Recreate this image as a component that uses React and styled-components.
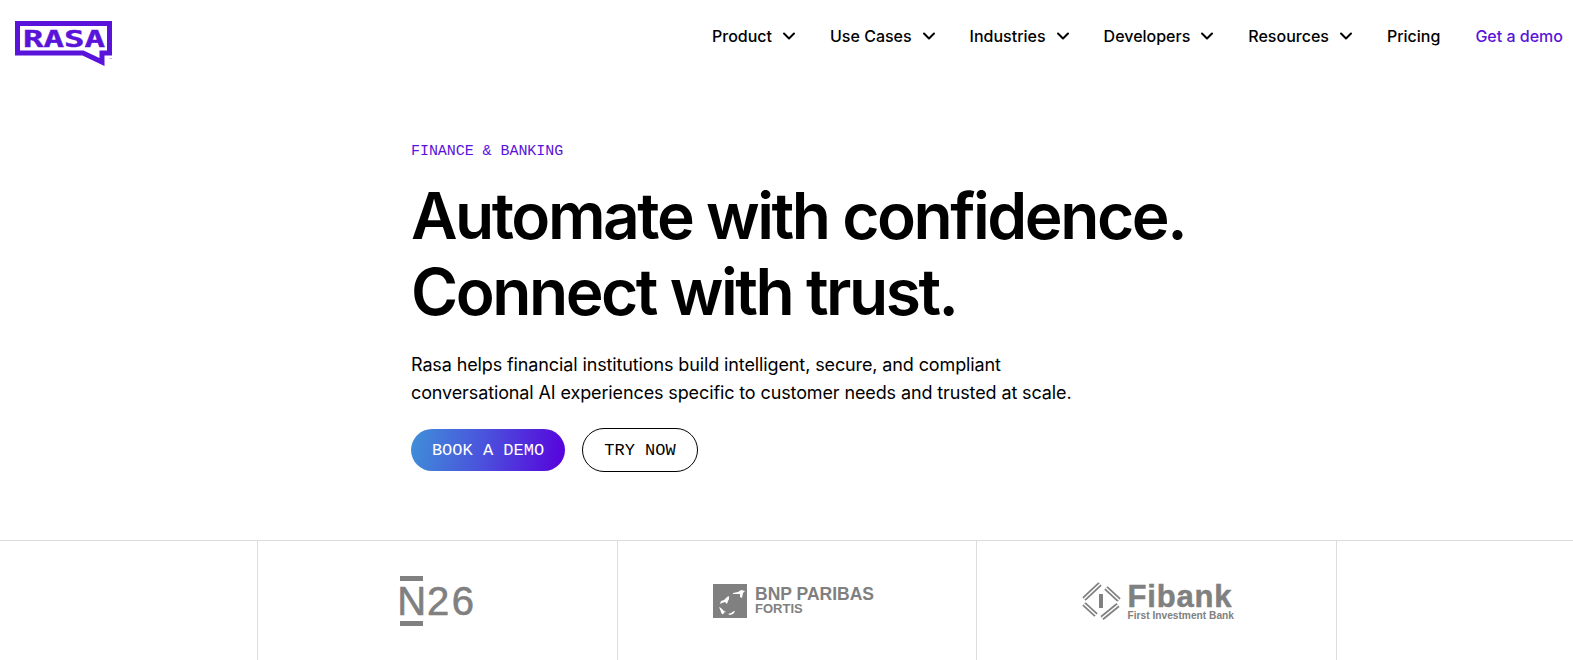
import React from "react";
import styled, { createGlobalStyle } from "styled-components";
import { ChevronDown } from "lucide-react";

const GlobalStyle = createGlobalStyle`
  html, body {
    margin: 0;
    padding: 0;
    height: 660px;
    overflow: hidden;
    background: #fff;
    font-family: Inter, "Liberation Sans", sans-serif;
    color: #000;
  }
`;

const purple = "#5a13d9";
const logoGrey = "#808080";

const Header = styled.header`
  height: 72px;
  display: flex;
  align-items: center;
  justify-content: space-between;
  padding: 0 10px 0 15px;
`;

const Logo = styled.svg`
  width: 100px;
  height: 48px;
  align-self: flex-start;
  margin-top: 21px;
  display: block;
`;

const Nav = styled.nav`
  display: flex;
  align-items: center;
  gap: 35px;
`;

const NavItem = styled.a`
  display: flex;
  align-items: center;
  gap: 7px;
  font-size: 16px;
  font-weight: 500;
  color: ${(p) => (p.$accent ? purple : "#000")};
`;

const Chevron = styled(ChevronDown)`
  margin-right: -4px;
`;

const Hero = styled.section`
  height: 468px;
  box-sizing: border-box;
  padding: 71px 0 0 411px;
`;

const Eyebrow = styled.div`
  font-family: "Liberation Mono", monospace;
  font-size: 15px;
  line-height: 18px;
  letter-spacing: -0.05px;
  color: ${purple};
`;

const Title = styled.h1`
  margin: 17px 0 0;
  font-size: 64px;
  line-height: 76px;
  font-weight: 600;
  letter-spacing: -2.45px;
`;

const Lead = styled.p`
  margin: 21px 0 0;
  font-size: 18px;
  line-height: 28px;
  letter-spacing: -0.12px;
`;

const Actions = styled.div`
  display: flex;
  align-items: center;
  gap: 17px;
  margin-top: 21px;
`;

const Button = styled.a`
  display: flex;
  align-items: center;
  justify-content: center;
  box-sizing: border-box;
  font-family: "Liberation Mono", monospace;
  font-size: 17px;
  border-radius: 22px;
  height: ${(p) => (p.$primary ? "42px" : "44px")};
  width: ${(p) => (p.$primary ? "154px" : "116px")};
  color: ${(p) => (p.$primary ? "#fff" : "#000")};
  background: ${(p) => (p.$primary ? "linear-gradient(100deg, #3f90d8 0%, #4a55dc 45%, #5800dc 100%)" : "#fff")};
  border: ${(p) => (p.$primary ? "none" : "1px solid #000")};
`;

const LogoRow = styled.section`
  display: grid;
  grid-template-columns: repeat(3, 359.7px);
  padding-left: 257px;
  border-top: 1px solid #dcdcdc;
  height: 119px;
`;

const LogoCell = styled.div`
  display: flex;
  align-items: center;
  justify-content: center;
  gap: ${(p) => p.$gap || 0}px;
  padding-right: ${(p) => p.$shiftLeft || 0}px;
  padding-left: ${(p) => p.$shiftRight || 0}px;
  color: ${logoGrey};
  border-left: 1px solid #dcdcdc;
  &:last-child {
    border-right: 1px solid #dcdcdc;
    margin-right: -1px;
  }
`;

const N26Letter = styled.span`
  box-sizing: border-box;
  display: flex;
  align-items: center;
  justify-content: center;
  width: 23px;
  height: 50px;
  border-top: 5px solid ${logoGrey};
  border-bottom: 5px solid ${logoGrey};
  font-size: 40px;
  line-height: 1;
  font-family: "Liberation Sans", sans-serif;
  -webkit-text-stroke: 0.6px ${logoGrey};
`;

const N26Digits = styled.span`
  font-family: "Liberation Sans", sans-serif;
  font-size: 40px;
  line-height: 1;
  letter-spacing: 2.5px;
  margin-left: 4px;
  -webkit-text-stroke: 0.6px ${logoGrey};
`;

const BnpText = styled.div`
  display: flex;
  flex-direction: column;
  font-family: "Liberation Sans", sans-serif;
  font-weight: 700;
`;

const BnpName = styled.span`
  font-size: 17.5px;
  line-height: 15px;
  white-space: nowrap;
`;

const BnpSub = styled.span`
  font-size: 13px;
  line-height: 13px;
`;

const FibankText = styled.div`
  display: flex;
  flex-direction: column;
  font-family: "Liberation Sans", sans-serif;
  font-weight: 700;
  padding-top: 3px;
`;

const FibankName = styled.span`
  font-size: 31px;
  line-height: 27px;
  letter-spacing: 0.8px;
  -webkit-text-stroke: 0.5px ${logoGrey};
`;

const FibankSub = styled.span`
  font-size: 10.2px;
  line-height: 12px;
  white-space: nowrap;
`;

const RasaLogo = () => (
  <Logo viewBox="0 0 100 48">
    <path d="M2.500 2.500H94.500V32H87V41L68 32H2.500Z" fill="none" stroke={purple} strokeWidth="5" />
    <text
      x="8"
      y="26"
      fontFamily="DejaVu Sans Mono, monospace"
      fontWeight="700"
      fontSize="23"
      fill={purple}
      stroke={purple}
      strokeWidth="0.4"
      textLength="82"
      lengthAdjust="spacingAndGlyphs"
    >
      RASA
    </text>
    <text x="94" y="39" fontSize="3" fill={purple} fontFamily="Liberation Sans, sans-serif">
      ™
    </text>
  </Logo>
);

const BnpMark = () => (
  <svg width="34" height="34" viewBox="0 0 34 34">
    <rect width="34" height="34" fill={logoGrey} />
    <g fill="#fff">
      <path d="M20 9l5-1 3-2 4 1-2 2-1 5-2-1 0-3-3 0-4 0z" />
      <path d="M8 17l3-1 3-3 2-1 0 3-1 2-1 3-2-2-3 1-2 1z" />
      <path d="M6 23l2 1 3 3 2 1-2 .500-1 2-1.500-1-1-3z" />
      <path d="M15 30l3-1 3-2 1 .500-2 2.500-3 1z" />
    </g>
  </svg>
);

const FibankStrip = ({ d }) => (
  <>
    <path d={d} stroke={logoGrey} strokeWidth="5" />
    <path d={d} stroke="#fff" strokeWidth="1.6" />
  </>
);

const FibankMark = () => (
  <svg width="42" height="42" viewBox="0 0 42 42" fill="none">
    <FibankStrip d="M4 19L20 4" />
    <FibankStrip d="M26 8L39 20" />
    <FibankStrip d="M38 25L22 38" />
    <FibankStrip d="M16 35L4 24" />
    <path d="M21 14V28" stroke={logoGrey} strokeWidth="4" />
  </svg>
);

const navItems = [
  { label: "Product", menu: true },
  { label: "Use Cases", menu: true },
  { label: "Industries", menu: true },
  { label: "Developers", menu: true },
  { label: "Resources", menu: true },
  { label: "Pricing" },
  { label: "Get a demo", accent: true },
];

export default function App() {
  return (
    <>
      <GlobalStyle />
      <Header>
        <RasaLogo />
        <Nav>
          {navItems.map((item) => (
            <NavItem key={item.label} $accent={item.accent}>
              {item.label}
              {item.menu && <Chevron size={20} strokeWidth={2.4} />}
            </NavItem>
          ))}
        </Nav>
      </Header>

      <Hero>
        <Eyebrow>FINANCE &amp; BANKING</Eyebrow>
        <Title>
          Automate with confidence.
          <br />
          Connect with trust.
        </Title>
        <Lead>
          Rasa helps financial institutions build intelligent, secure, and compliant
          <br />
          conversational AI experiences specific to customer needs and trusted at scale.
        </Lead>
        <Actions>
          <Button $primary>BOOK A DEMO</Button>
          <Button>TRY NOW</Button>
        </Actions>
      </Hero>

      <LogoRow>
        <LogoCell $shiftRight={2}>
          <N26Letter>N</N26Letter>
          <N26Digits>26</N26Digits>
        </LogoCell>
        <LogoCell $gap={8} $shiftLeft={7}>
          <BnpMark />
          <BnpText>
            <BnpName>BNP PARIBAS</BnpName>
            <BnpSub>FORTIS</BnpSub>
          </BnpText>
        </LogoCell>
        <LogoCell $gap={6}>
          <FibankMark />
          <FibankText>
            <FibankName>Fibank</FibankName>
            <FibankSub>First Investment Bank</FibankSub>
          </FibankText>
        </LogoCell>
      </LogoRow>
    </>
  );
}
